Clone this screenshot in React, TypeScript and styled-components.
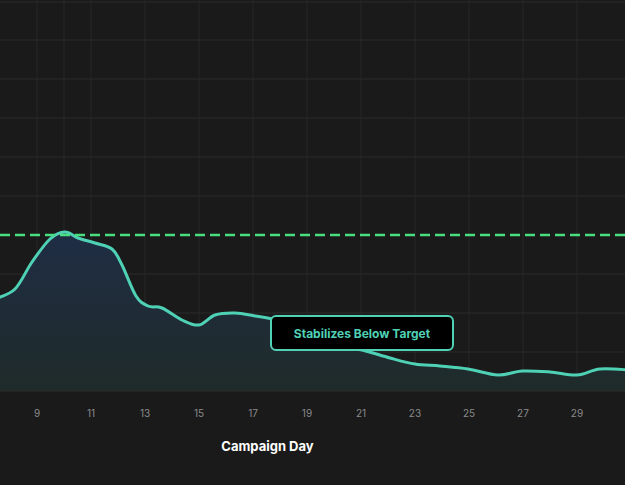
import React from "react";
import styled, { createGlobalStyle } from "styled-components";

const Global = createGlobalStyle`
  html, body { margin: 0; padding: 0; background: #1a1a1a; }
  body { font-family: Inter, "Noto Sans", sans-serif; }
`;

const Page = styled.div`
  width: 625px;
  height: 485px;
  background: #1a1a1a;
  display: flex;
  flex-direction: column;
  overflow: hidden;
`;

const ChartArea = styled.div`
  position: relative;
  width: 625px;
  height: 425px;
`;

const Annotation = styled.div`
  position: absolute;
  left: 270px;
  top: 315px;
  width: 184px;
  height: 36px;
  box-sizing: border-box;
  border: 2px solid #4fd1b5;
  border-radius: 6px;
  background: #000;
  color: #4fd1b5;
  font-size: 12px;
  font-weight: 700;
  display: flex;
  align-items: center;
  justify-content: center;
`;

const AxisTitle = styled.div`
  width: 535px;
  text-align: center;
  color: #fff;
  font-size: 13px;
  font-weight: 700;
  margin-top: 13px;
`;

const pts: [number, number][] = [
  [-5, 299], [15, 289], [32, 262], [50, 239], [65, 232], [78, 238], [95, 243], [112, 249],
  [122, 265], [136, 296], [148, 306], [162, 308], [182, 320], [199, 325], [215, 315],
  [235, 313], [255, 316], [275, 320], [295, 330], [315, 343], [340, 347], [362, 350],
  [390, 358], [415, 364], [440, 366], [468, 369], [498, 375], [522, 371], [550, 372],
  [577, 375], [600, 369], [630, 370],
];

function smooth(p: [number, number][]) {
  let d = `M${p[0][0]},${p[0][1]}`;
  for (let i = 0; i < p.length - 1; i++) {
    const p0 = p[i - 1] || p[i];
    const p1 = p[i];
    const p2 = p[i + 1];
    const p3 = p[i + 2] || p2;
    const c1x = p1[0] + (p2[0] - p0[0]) / 6;
    const c1y = p1[1] + (p2[1] - p0[1]) / 6;
    const c2x = p2[0] - (p3[0] - p1[0]) / 6;
    const c2y = p2[1] - (p3[1] - p1[1]) / 6;
    d += ` C${c1x},${c1y} ${c2x},${c2y} ${p2[0]},${p2[1]}`;
  }
  return d;
}

const line = smooth(pts);
const area = `${line} L630,391 L-5,391 Z`;
const hLines = [2, 40, 79, 118, 157, 196, 274, 313, 352];
const days = [9, 11, 13, 15, 17, 19, 21, 23, 25, 27, 29];
const dx = (d: number) => 37 + (d - 9) * 27;

export default function App() {
  return (
    <Page>
      <Global />
      <ChartArea>
        <svg width="625" height="425" style={{ display: "block" }}>
          <defs>
            <linearGradient id="fill" x1="0" y1="232" x2="0" y2="391" gradientUnits="userSpaceOnUse">
              <stop offset="0" stopColor="#1f2d45" />
              <stop offset="1" stopColor="#1f2b29" />
            </linearGradient>
          </defs>
          {hLines.map((y) => (
            <line key={y} x1="0" x2="625" y1={y} y2={y} stroke="#2a2a2a" strokeWidth="1" />
          ))}
          {[10, ...days, 31].map((d) => (
            <line key={d} x1={dx(d)} x2={dx(d)} y1="0" y2="391" stroke="#262626" strokeWidth="1" />
          ))}
          <path d={area} fill="url(#fill)" />
          <line x1="0" x2="625" y1="391" y2="391" stroke="#2a2a2a" />
          <path d={line} fill="none" stroke="#4fd1b5" strokeWidth="3" />
          <line x1="0" x2="625" y1="235" y2="235" stroke="#4ade80" strokeWidth="2.5" strokeDasharray="10 5" />
          {days.map((d) => (
            <text key={d} x={dx(d)} y="417" fill="#8a8a8a" fontSize="10" textAnchor="middle"
              fontFamily="Inter, 'Noto Sans', sans-serif">{d}</text>
          ))}
        </svg>
        <Annotation>Stabilizes Below Target</Annotation>
      </ChartArea>
      <AxisTitle>Campaign Day</AxisTitle>
    </Page>
  );
}
